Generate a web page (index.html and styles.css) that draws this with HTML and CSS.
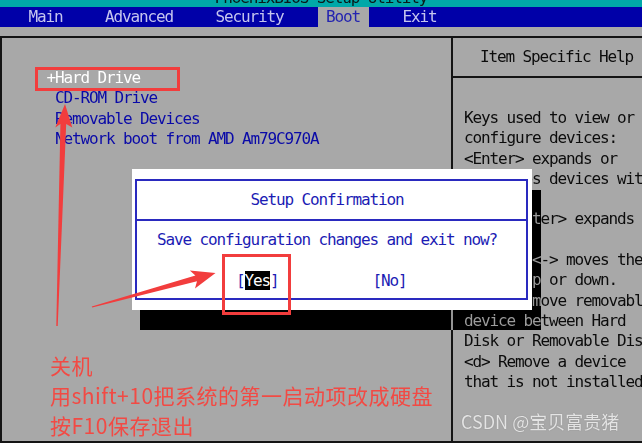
FILE: index.html
```html
<!DOCTYPE html>
<html lang="zh-CN">
<head>
<meta charset="utf-8">
<title>PhoenixBIOS Setup Utility</title>
<link rel="stylesheet" href="styles.css">
</head>
<body>
<div class="screen">
  <header class="title"><span class="title-text">PhoenixBIOS Setup Utility</span></header>
  <nav class="menu">
    <span class="menu-item">Main</span>
    <span class="menu-item">Advanced</span>
    <span class="menu-item">Security</span>
    <span class="menu-item active">Boot</span>
    <span class="menu-item">Exit</span>
  </nav>
  <main class="frame">
    <section class="boot-list">
      <div class="boot-item selected">+Hard Drive</div>
      <div class="boot-item"> CD-ROM Drive</div>
      <div class="boot-item"> Removable Devices</div>
      <div class="boot-item"> Network boot from AMD Am79C970A</div>
    </section>
    <aside class="help">
      <div class="help-title">Item Specific Help</div>
      <div class="help-body">
        <div class="help-line">Keys used to view or</div>
        <div class="help-line">configure devices:</div>
        <div class="help-line">&lt;Enter&gt; expands or</div>
        <div class="help-line">collapses devices with</div>
        <div class="help-line">a + or -</div>
        <div class="help-line">&lt;Ctrl+Enter&gt; expands all</div>
        <div class="help-line"> </div>
        <div class="help-line">&lt;+&gt; and &lt;-&gt; moves the</div>
        <div class="help-line">device up or down.</div>
        <div class="help-line">&lt;n&gt; May move removable</div>
        <div class="help-line">device between Hard</div>
        <div class="help-line">Disk or Removable Disk</div>
        <div class="help-line">&lt;d&gt; Remove a device</div>
        <div class="help-line">that is not installed.</div>
      </div>
    </aside>
  </main>

  <div class="dialog-shadow"></div>
  <div class="dialog">
    <div class="dialog-box">
      <div class="dialog-title">Setup Confirmation</div>
      <div class="dialog-msg">Save configuration changes and exit now?</div>
      <div class="dialog-buttons">
        <span class="btn">[<span class="btn-focus">Yes</span>]</span>
        <span class="btn">[No]</span>
      </div>
    </div>
  </div>

  <svg class="marks" width="642" height="443" viewBox="0 0 642 443">
    <rect x="36.5" y="68.5" width="142" height="21" fill="none" stroke="#f23d3d" stroke-width="3"/>
    <rect x="223.5" y="255.5" width="66" height="58" fill="none" stroke="#f23d3d" stroke-width="3"/>
    <polygon fill="#f23d3d" points="56.3,326 60.4,124 55.3,127.5 65,104 72.3,127.5 66.2,124 57.7,326"/>
    <polygon fill="#f23d3d" points="91.8,306.4 195.4,275.5 189.8,270.4 215.5,273 195,288.6 197,281.3 92.2,307.6"/>
  </svg>

  <div class="note">
    <div>关机</div>
    <div>用shift+10把系统的第一启动项改成硬盘</div>
    <div>按F10保存退出</div>
  </div>

  <div class="watermark">CSDN @宝贝富贵猪</div>
</div>
</body>
</html>
```

FILE: styles.css
```css
html, body {
  margin: 0;
  padding: 0;
  background: #a8a8a8;
}

.screen {
  position: relative;
  width: 642px;
  height: 443px;
  overflow: hidden;
  background: #a8a8a8;
  font-family: "DejaVu Sans Mono", "Liberation Mono", monospace;
  font-size: 16px;
  letter-spacing: -1.133px;
}

/* title strip (only the bottom of the text is visible) */
.title {
  height: 7px;
  background: #00a8a8;
  overflow: hidden;
  text-align: center;
  color: #0a1a1a;
  line-height: 16px;
}
.title-text {
  display: block;
  margin-top: -10px;
}

/* menu bar */
.menu {
  display: flex;
  height: 20px;
  background: #0000a8;
  padding-left: 20px;
  gap: 25.5px;
  line-height: 20px;
  color: #c4c4ee;
}
.menu-item {
  padding: 0 8.5px;
}
.menu-item.active {
  background: #a8a8a8;
  color: #2424b0;
}

/* main frame */
.frame {
  margin-top: 9px;
  height: 407px;
  box-sizing: border-box;
  border: 2px solid #141414;
  border-right: none;
  display: grid;
  grid-template-columns: 451px 1fr;
}

.boot-list {
  border-right: 2px solid #141414;
  padding: 30px 0 0 44.5px;
  line-height: 20.3px;
  color: #0a0aa8;
}
.boot-item {
  white-space: pre;
  height: 20.3px;
}
.boot-item.selected {
  color: #ffffff;
}

.help {
  overflow: hidden;
  color: #0c0c0c;
}
.help-title {
  height: 38px;
  line-height: 38px;
  border-bottom: 2px solid #141414;
  padding-left: 27px;
  white-space: pre;
}
.help-body {
  padding: 30px 0 0 11px;
  line-height: 20.3px;
}
.help-line {
  white-space: pre;
  height: 20.3px;
}

/* confirmation dialog */
.dialog-shadow {
  position: absolute;
  left: 140px;
  top: 190px;
  width: 401px;
  height: 140px;
  background: #a8a8a8;
  mix-blend-mode: difference;
}

.dialog {
  position: absolute;
  left: 132px;
  top: 169px;
  width: 400px;
  height: 141px;
  box-sizing: border-box;
  padding: 10px 4px 10px 3px;
  background: #ffffff;
  color: #1c1cb4;
}
.dialog-box {
  height: 100%;
  box-sizing: border-box;
  border: 2px solid #2a2abf;
}
.dialog-title {
  height: 38px;
  line-height: 38px;
  border-bottom: 2px solid #2a2abf;
  text-align: center;
  padding-right: 9px;
}
.dialog-msg {
  padding: 9px 0 0 20px;
  line-height: 20.3px;
  white-space: pre;
}
.dialog-buttons {
  display: flex;
  gap: 94px;
  margin-top: 20.3px;
  padding-left: 99px;
  line-height: 20.3px;
}
.btn-focus {
  background: #000000;
  color: #ffffff;
}

/* annotations */
.marks {
  position: absolute;
  left: 0;
  top: 0;
  pointer-events: none;
}

.note {
  position: absolute;
  left: 50px;
  top: 350px;
  color: #f24a44;
  font-family: "Noto Sans CJK SC", "Noto Sans", sans-serif;
  font-size: 21px;
  line-height: 30px;
  letter-spacing: 0.5px;
  white-space: nowrap;
}

.watermark {
  position: absolute;
  left: 461px;
  top: 408px;
  color: #e4e4e4;
  font-family: "Noto Sans CJK SC", "Noto Sans", sans-serif;
  font-size: 18px;
  line-height: 26px;
  letter-spacing: 0;
  text-shadow: 0 0 1px #777777;
  white-space: nowrap;
}
```
